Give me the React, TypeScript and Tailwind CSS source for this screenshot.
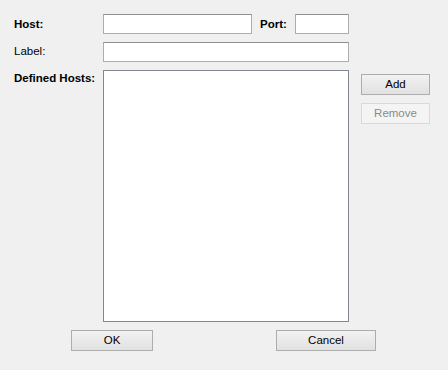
export default function App() {
  const font = { fontFamily: '"Liberation Sans", Arial, sans-serif' };
  const input = "bg-white border border-[#abadb3] border-t-[#8f8f8f] h-[20px]";
  const btn =
    "h-[21px] border border-[#adadad] bg-gradient-to-b from-[#f2f2f2] to-[#e1e1e1] text-[11.5px] text-black flex items-center justify-center";

  return (
    <div
      className="w-[448px] h-[370px] bg-[#f0f0f0] pl-[14px] pt-[14px] text-[11.5px] text-black"
      style={font}
    >
      <div className="flex items-center">
        <span className="w-[89px] font-bold pt-[1px]">Host:</span>
        <div className={`${input} w-[149px]`} />
        <span className="ml-[8px] w-[35px] font-bold pt-[1px]">Port:</span>
        <div className={`${input} w-[54px]`} />
      </div>

      <div className="flex items-center mt-[8px]">
        <span className="w-[89px]">Label:</span>
        <div className={`${input} w-[246px]`} />
      </div>

      <div className="flex mt-[8px]">
        <span className="w-[89px] font-bold pt-[1px] leading-[14px]">Defined Hosts:</span>
        <div className="w-[246px] h-[252px] bg-white border border-[#828790]" />
        <div className="flex flex-col ml-[12px] mt-[4px] gap-[8px]">
          <button className={`${btn} w-[69px]`}>Add</button>
          <button
            disabled
            className="w-[69px] h-[21px] border border-[#d9d9d9] bg-[#f4f4f4] text-[11.5px] text-[#8a8a8a] flex items-center justify-center"
          >
            Remove
          </button>
        </div>
      </div>

      <div className="flex mt-[8px] ml-[57px] gap-[123px]">
        <button className={`${btn} w-[82px]`}>OK</button>
        <button className={`${btn} w-[100px]`}>Cancel</button>
      </div>
    </div>
  );
}
